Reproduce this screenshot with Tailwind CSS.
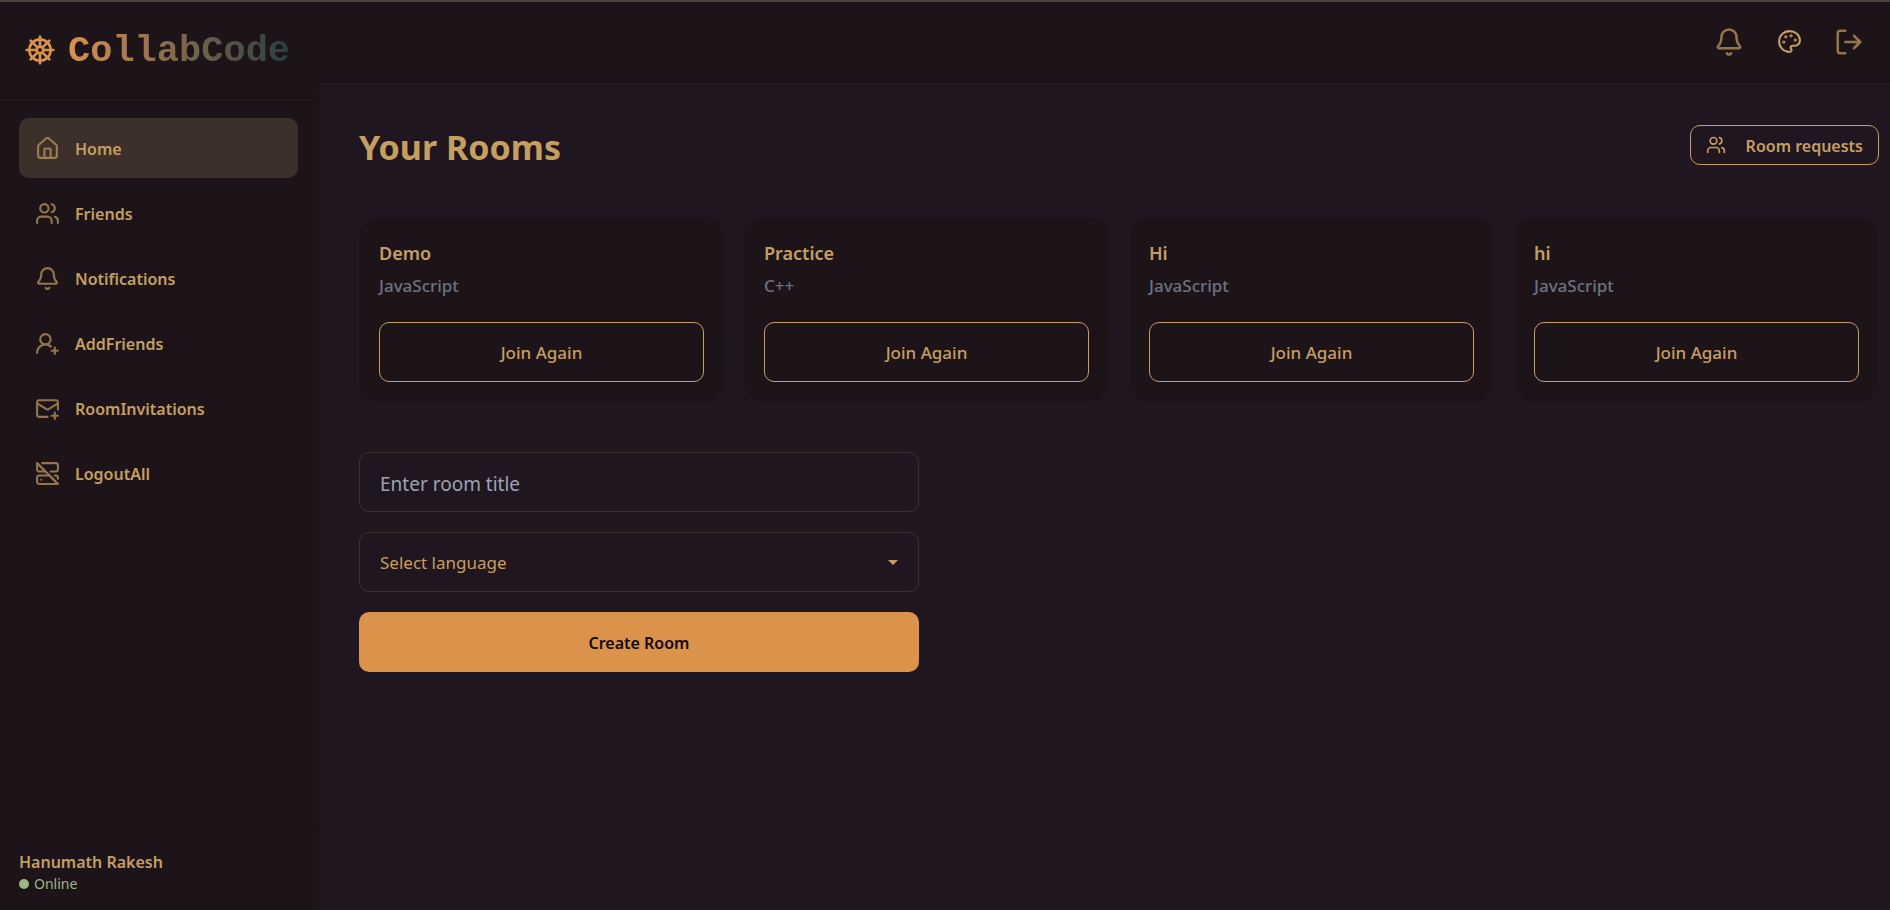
<!DOCTYPE html>
<html lang="en">
<head>
<meta charset="utf-8">
<title>CollabCode</title>
<script src="https://cdn.jsdelivr.net/npm/@tailwindcss/browser@4"></script>
</head>
<body class="flex min-h-screen flex-col border-t-2 border-[#4a463c] bg-[#20161f] font-['Noto_Sans','Open_Sans',sans-serif] text-[#c59f60]">
<svg class="hidden">
  <defs>
    <symbol id="bell" viewBox="0 0 24 24"><path d="M10.268 21a2 2 0 0 0 3.464 0"/><path d="M3.262 15.326A1 1 0 0 0 4 17h16a1 1 0 0 0 .74-1.673C19.41 13.956 18 12.499 18 8A6 6 0 0 0 6 8c0 4.499-1.411 5.956-2.738 7.326"/></symbol>
    <symbol id="users" viewBox="0 0 24 24"><path d="M16 21v-2a4 4 0 0 0-4-4H6a4 4 0 0 0-4 4v2"/><circle cx="9" cy="7" r="4"/><path d="M22 21v-2a4 4 0 0 0-3-3.87"/><path d="M16 3.13a4 4 0 0 1 0 7.75"/></symbol>
  </defs>
</svg>
<div class="flex flex-1">
  <aside class="flex w-[319px] shrink-0 flex-col border-r border-[#150f14] bg-[#1d141a]">
    <a href="#" class="flex h-24 items-center gap-3 border-b border-[#150f14] px-6">
      <svg class="size-8 fill-none stroke-[#db924b] stroke-2" viewBox="0 0 24 24" stroke-linecap="round" stroke-linejoin="round"><circle cx="12" cy="12" r="8"/><path d="M12 2v7.5M19 5l-5.23 5.23M22 12h-7.5M19 19l-5.23-5.23M12 14.5V22M10.23 13.77 5 19M9.5 12H2M10.23 10.23 5 5"/><circle cx="12" cy="12" r="2.5"/></svg>
      <span class="bg-linear-to-r from-[#db924b] to-[#263e3f] bg-clip-text pt-0.5 font-['Liberation_Mono',monospace] text-[37px] leading-[50px] font-bold text-transparent">CollabCode</span>
    </a>
    <nav class="flex flex-1 flex-col gap-[5px] py-5 pr-5 pl-[19px] text-base font-semibold">
      <a href="#" class="flex h-[60px] items-center gap-[15px] rounded-[10px] bg-[#3d2f2a] px-4">
        <svg class="size-[25px] fill-none stroke-current stroke-2 opacity-70" viewBox="0 0 24 24" stroke-linecap="round" stroke-linejoin="round"><path d="M15 21v-8a1 1 0 0 0-1-1h-4a1 1 0 0 0-1 1v8"/><path d="M3 10a2 2 0 0 1 .709-1.528l7-5.999a2 2 0 0 1 2.582 0l7 5.999A2 2 0 0 1 21 10v9a2 2 0 0 1-2 2H5a2 2 0 0 1-2-2z"/></svg><span class="pt-0.5">Home</span></a>
      <a href="#" class="flex h-[60px] items-center gap-[15px] rounded-[10px] px-4">
        <svg class="size-[25px] fill-none stroke-current stroke-2 opacity-70" stroke-linecap="round" stroke-linejoin="round"><use href="#users"/></svg><span class="pt-0.5">Friends</span></a>
      <a href="#" class="flex h-[60px] items-center gap-[15px] rounded-[10px] px-4">
        <svg class="size-[25px] fill-none stroke-current stroke-2 opacity-70" stroke-linecap="round" stroke-linejoin="round"><use href="#bell"/></svg><span class="pt-0.5">Notifications</span></a>
      <a href="#" class="flex h-[60px] items-center gap-[15px] rounded-[10px] px-4">
        <svg class="size-[25px] fill-none stroke-current stroke-2 opacity-70" viewBox="0 0 24 24" stroke-linecap="round" stroke-linejoin="round"><path d="M2 21a8 8 0 0 1 13.292-6"/><circle cx="10" cy="8" r="5"/><path d="M19 16v6M22 19h-6"/></svg><span class="pt-0.5">AddFriends</span></a>
      <a href="#" class="flex h-[60px] items-center gap-[15px] rounded-[10px] px-4">
        <svg class="size-[25px] fill-none stroke-current stroke-2 opacity-70" viewBox="0 0 24 24" stroke-linecap="round" stroke-linejoin="round"><path d="M22 13V6a2 2 0 0 0-2-2H4a2 2 0 0 0-2 2v12c0 1.1.9 2 2 2h8"/><path d="m22 7-8.97 5.7a1.94 1.94 0 0 1-2.06 0L2 7"/><path d="M19 16v6M16 19h6"/></svg><span class="pt-0.5">RoomInvitations</span></a>
      <a href="#" class="flex h-[60px] items-center gap-[15px] rounded-[10px] px-4">
        <svg class="size-[25px] fill-none stroke-current stroke-2 opacity-70" viewBox="0 0 24 24" stroke-linecap="round" stroke-linejoin="round"><path d="M7 2h13a2 2 0 0 1 2 2v4a2 2 0 0 1-2 2h-5"/><path d="M10 10 2.5 2.5C2 2 2 2.5 2 5v3a2 2 0 0 0 2 2h6z"/><path d="M22 17v-1a2 2 0 0 0-2-2h-1"/><path d="M4 14a2 2 0 0 0-2 2v4a2 2 0 0 0 2 2h16.5l1-.5.5.5-8-8H4z"/><path d="M6 18h.01M2 2l20 20"/></svg><span class="pt-0.5">LogoutAll</span></a>
    </nav>
    <div class="border-t border-[#150f14] px-[19px] pt-5 pb-4">
      <p class="text-base leading-6 font-semibold">Hanumath Rakesh</p>
      <p class="flex items-center gap-[5px] text-sm leading-5 text-[#9db787]"><span class="size-[10px] rounded-full bg-[#9db787]"></span>Online</p>
    </div>
  </aside>
  <div class="flex min-w-0 flex-1 flex-col">
    <header class="flex h-20 items-center justify-end border-b border-[#150f14] bg-[#1d141a] px-[11px]">
      <button aria-label="Notifications" class="grid size-[60px] place-items-center"><svg class="size-[30px] fill-none stroke-current stroke-2 opacity-70" stroke-linecap="round" stroke-linejoin="round"><use href="#bell"/></svg></button>
      <button aria-label="Theme" class="grid size-[60px] place-items-center"><svg class="size-[25px] fill-none stroke-current stroke-2" viewBox="0 0 24 24" stroke-linecap="round" stroke-linejoin="round"><circle cx="13.5" cy="6.5" r=".5" class="fill-current"/><circle cx="17.5" cy="10.5" r=".5" class="fill-current"/><circle cx="8.5" cy="7.5" r=".5" class="fill-current"/><circle cx="6.5" cy="12.5" r=".5" class="fill-current"/><path d="M12 22a1 1 0 0 1 0-20 10 9 0 0 1 10 9 5 5 0 0 1-5 5h-2.25a1.75 1.75 0 0 0-1.4 2.8l.3.4a1.75 1.75 0 0 1-1.4 2.8z"/></svg></button>
      <button aria-label="Log out" class="grid size-[60px] place-items-center"><svg class="size-[30px] fill-none stroke-current stroke-2 opacity-70" viewBox="0 0 24 24" stroke-linecap="round" stroke-linejoin="round"><path d="M9 21H5a2 2 0 0 1-2-2V5a2 2 0 0 1 2-2h4M16 17l5-5-5-5M21 12H9"/></svg></button>
    </header>
    <main class="flex-1 pt-[43px] pr-[11px] pl-10">
      <div class="flex items-start justify-between">
        <h1 class="text-[34px] leading-[44px] font-bold">Your Rooms</h1>
        <button class="flex h-10 items-center gap-5 rounded-[10px] border border-[#c59f60] px-[15px] text-base font-semibold"><svg class="size-5 fill-none stroke-current stroke-2" stroke-linecap="round" stroke-linejoin="round"><use href="#users"/></svg><span class="pt-0.5">Room requests</span></button>
      </div>
      <section class="mt-12 grid grid-cols-4 gap-5">
        <article class="rounded-[20px] bg-[#1d141a] p-5">
          <h2 class="text-lg leading-8 font-semibold">Demo</h2>
          <p class="mt-1 text-[17px] leading-[25px] font-medium text-[#6b7280]">JavaScript</p>
          <button class="mt-6 h-[60px] w-full rounded-[10px] border border-[#c59f60] pt-0.5 text-[17px] font-medium">Join Again</button>
        </article>
        <article class="rounded-[20px] bg-[#1d141a] p-5">
          <h2 class="text-lg leading-8 font-semibold">Practice</h2>
          <p class="mt-1 text-[17px] leading-[25px] font-medium text-[#6b7280]">C++</p>
          <button class="mt-6 h-[60px] w-full rounded-[10px] border border-[#c59f60] pt-0.5 text-[17px] font-medium">Join Again</button>
        </article>
        <article class="rounded-[20px] bg-[#1d141a] p-5">
          <h2 class="text-lg leading-8 font-semibold">Hi</h2>
          <p class="mt-1 text-[17px] leading-[25px] font-medium text-[#6b7280]">JavaScript</p>
          <button class="mt-6 h-[60px] w-full rounded-[10px] border border-[#c59f60] pt-0.5 text-[17px] font-medium">Join Again</button>
        </article>
        <article class="rounded-[20px] bg-[#1d141a] p-5">
          <h2 class="text-lg leading-8 font-semibold">hi</h2>
          <p class="mt-1 text-[17px] leading-[25px] font-medium text-[#6b7280]">JavaScript</p>
          <button class="mt-6 h-[60px] w-full rounded-[10px] border border-[#c59f60] pt-0.5 text-[17px] font-medium">Join Again</button>
        </article>
      </section>
      <form class="mt-[50px] flex w-[560px] max-w-full flex-col gap-5">
        <input type="text" aria-label="Room title" placeholder="Enter room title" class="h-[60px] rounded-[10px] border border-[#3d302c] bg-transparent px-5 pt-1 text-[19px] placeholder:text-[#9ca3af]">
        <div class="relative">
          <select aria-label="Language" class="h-[60px] w-full appearance-none rounded-[10px] border border-[#3d302c] bg-[#20161f] px-5 pt-0.5 text-[17px]"><option>Select language</option><option>JavaScript</option><option>C++</option></select>
          <svg class="pointer-events-none absolute top-7 right-[21px] h-[5px] w-[10px] fill-current" viewBox="0 0 10 5"><path d="M0 0h10L5 5z"/></svg>
        </div>
        <button type="button" class="h-[60px] rounded-[10px] bg-[#db924b] pt-0.5 text-base font-semibold text-[#110802]">Create Room</button>
      </form>
    </main>
  </div>
</div>
</body>
</html>
